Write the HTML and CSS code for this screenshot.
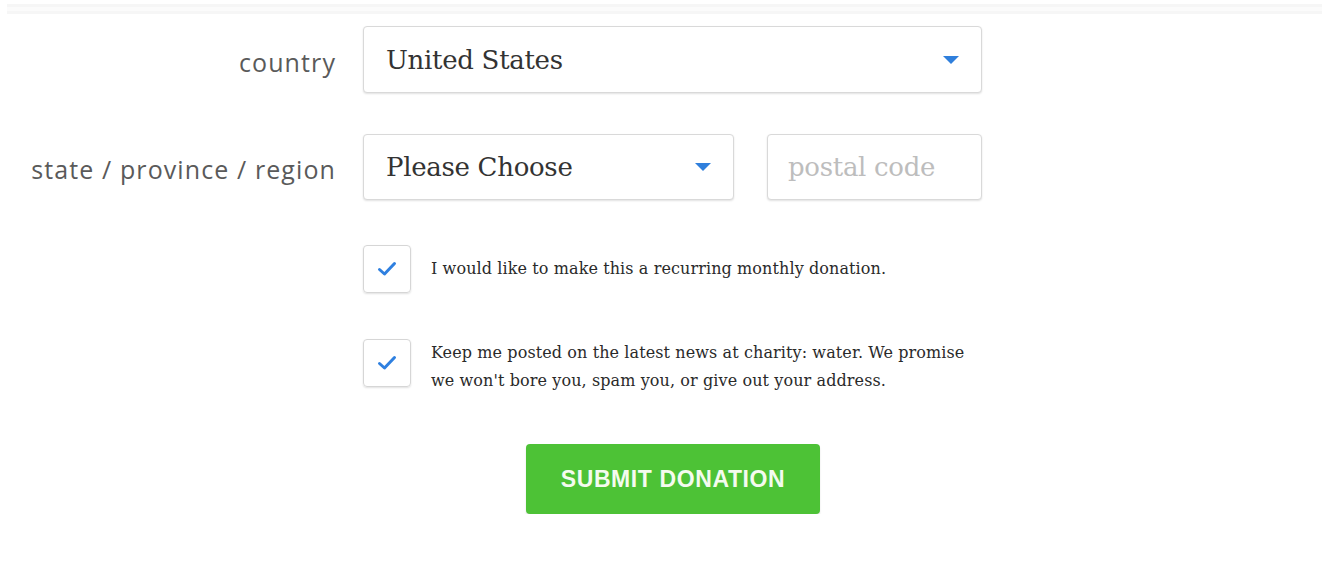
FILE: index.html
```html
<!DOCTYPE html>
<html lang="en">
<head>
<meta charset="utf-8">
<title>Donate</title>
<link rel="stylesheet" href="styles.css">
</head>
<body>
<div class="top-strip"></div>
<form class="donate-form">
  <div class="row">
    <label class="field-label">country</label>
    <div class="fields">
      <div class="select select-wide">
        <span class="select-value">United States</span>
        <span class="caret"></span>
      </div>
    </div>
  </div>
  <div class="row row-state">
    <label class="field-label">state / province / region</label>
    <div class="fields">
      <div class="select select-state">
        <span class="select-value">Please Choose</span>
        <span class="caret"></span>
      </div>
      <div class="input input-postal"><span class="placeholder">postal code</span></div>
    </div>
  </div>
  <div class="row row-check">
    <span></span>
    <div class="check-item">
      <span class="checkbox"><svg viewBox="0 0 20 16" width="20" height="16"><path d="M2.5 8.5 L7.5 13 L17.5 2.5" fill="none" stroke="#2f80e0" stroke-width="3" stroke-linecap="round" stroke-linejoin="round"/></svg></span>
      <span class="check-text">I would like to make this a recurring monthly donation.</span>
    </div>
  </div>
  <div class="row row-check2">
    <span></span>
    <div class="check-item check-item-top">
      <span class="checkbox"><svg viewBox="0 0 20 16" width="20" height="16"><path d="M2.5 8.5 L7.5 13 L17.5 2.5" fill="none" stroke="#2f80e0" stroke-width="3" stroke-linecap="round" stroke-linejoin="round"/></svg></span>
      <span class="check-text">Keep me posted on the latest news at charity: water. We promise<br>we won't bore you, spam you, or give out your address.</span>
    </div>
  </div>
  <div class="submit-row">
    <button type="button" class="submit">SUBMIT DONATION</button>
  </div>
</form>
</body>
</html>
```

FILE: styles.css
```css
html, body {
  margin: 0;
  padding: 0;
  background: #fff;
}

.top-strip {
  margin: 4px 0 0 7px;
  height: 10px;
  background: linear-gradient(#f6f6f6 0 3px, #fbfbfb 3px 7px, #f6f6f6 7px 10px);
}

.donate-form {
  padding-top: 12px;
}

.row {
  display: grid;
  grid-template-columns: 335px 619px;
  column-gap: 28px;
  align-items: center;
}

.row-state { margin-top: 41px; }
.row-check { margin-top: 45px; }
.row-check2 { margin-top: 46px; align-items: start; }

.field-label {
  text-align: right;
  font-family: "Open Sans", "Lato", sans-serif;
  font-size: 25px;
  color: #5a5a5a;
  padding-top: 4px;
  letter-spacing: 1.1px;
  margin-right: -1px;
}

.fields {
  display: flex;
  gap: 33px;
}

.select, .input {
  box-sizing: border-box;
  height: 67px;
  border: 1px solid #d9d9d9;
  border-radius: 4px;
  box-shadow: 0 1px 2px rgba(0, 0, 0, 0.12);
  background: #fff;
  display: flex;
  align-items: center;
  font-family: "DejaVu Serif", Georgia, serif;
}

.select {
  padding: 0 22px 0 22px;
  justify-content: space-between;
}

.select-wide { width: 619px; }
.select-state { width: 371px; height: 66px; }
.input-postal { width: 215px; height: 66px; padding-left: 20px; }

.select-value {
  font-size: 26px;
  color: #333;
  letter-spacing: -0.3px;
}

.placeholder {
  font-size: 26px;
  color: #bdbdbd;
  letter-spacing: -0.3px;
}

.caret {
  width: 0;
  height: 0;
  border-left: 8px solid transparent;
  border-right: 8px solid transparent;
  border-top: 8px solid #2f7fdc;
  margin-right: 0;
}

.check-item {
  display: flex;
  align-items: center;
  gap: 20px;
}

.check-item-top {
  align-items: flex-start;
}

.checkbox {
  box-sizing: border-box;
  flex: none;
  width: 48px;
  height: 48px;
  border: 1px solid #d6d6d6;
  border-radius: 4px;
  box-shadow: 0 1px 2px rgba(0, 0, 0, 0.12);
  display: flex;
  align-items: center;
  justify-content: center;
}

.check-text {
  font-family: "DejaVu Serif", Georgia, serif;
  font-size: 16px;
  line-height: 28px;
  color: #2a2a2a;
  letter-spacing: 0.1px;
  white-space: nowrap;
}

.submit-row {
  display: flex;
  margin-top: 49px;
  padding-left: 526px;
}

.submit {
  width: 294px;
  height: 70px;
  border: none;
  border-radius: 4px;
  background: #4dc236;
  box-shadow: 0 2px 2px rgba(0, 0, 0, 0.12);
  color: #f4fbef;
  font-family: "Liberation Sans", Arial, sans-serif;
  font-weight: bold;
  font-size: 23px;
  letter-spacing: 0.6px;
  padding: 0;
}
```
